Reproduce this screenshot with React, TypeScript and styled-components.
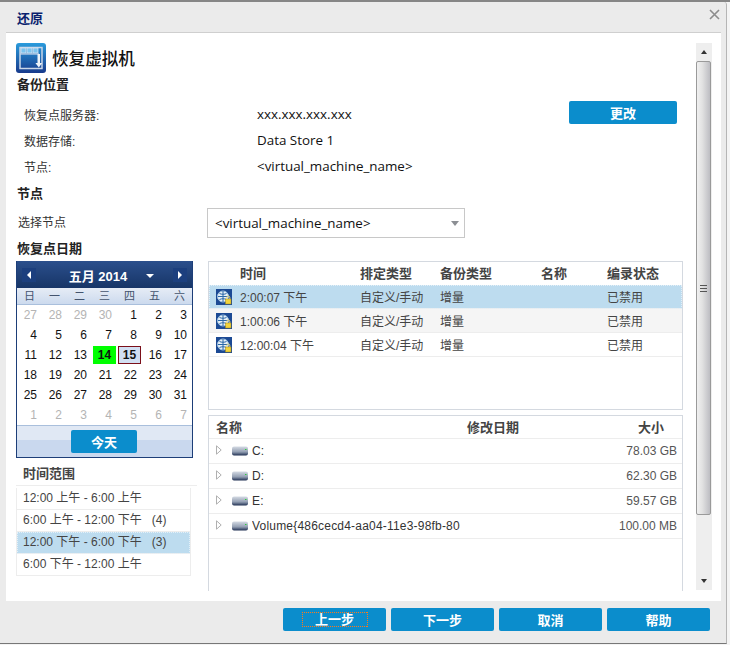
import { createGlobalStyle, styled } from 'styled-components';

const FONT = `"Liberation Sans", "Noto Sans CJK SC", sans-serif`;

const weekdays = ['日', '一', '二', '三', '四', '五', '六'];
const days = [27, 28, 29, 30, 1, 2, 3, 4, 5, 6, 7, 8, 9, 10, 11, 12, 13, 14, 15, 16, 17, 18, 19, 20, 21, 22, 23, 24, 25, 26, 27, 28, 29, 30, 31, 1, 2, 3, 4, 5, 6, 7];
const ranges = [
    { text: '12:00 上午 - 6:00 上午' },
    { text: '6:00 上午 - 12:00 下午', count: '(4)' },
    { text: '12:00 下午 - 6:00 下午', count: '(3)', active: true },
    { text: '6:00 下午 - 12:00 上午' },
];
const points = [
    { time: '2:00:07 下午', active: true },
    { time: '1:00:06 下午', alt: true },
    { time: '12:00:04 下午' },
];
const volumes = [
    { name: 'C:', size: '78.03 GB' },
    { name: 'D:', size: '62.30 GB' },
    { name: 'E:', size: '59.57 GB' },
    { name: 'Volume{486cecd4-aa04-11e3-98fb-806e6f6e6963}', size: '100.00 MB' },
];

function VmIcon() {
    return (
        <svg width="30" height="30" viewBox="0 0 30 30">
            <defs>
                <linearGradient id="vmBg" x1="0" y1="0" x2="0" y2="1">
                    <stop offset="0" stopColor="#2a9bdc" />
                    <stop offset="1" stopColor="#173a8c" />
                </linearGradient>
            </defs>
            <rect width="30" height="30" rx="3" fill="url(#vmBg)" />
            <rect x="4" y="4.5" width="22" height="21" fill="none" stroke="#c9d6e8" strokeWidth="1.5" />
            <rect x="5" y="5" width="5" height="5" fill="#7cc4ee" stroke="#d7e4f2" strokeWidth="0.8" />
            <rect x="11" y="5" width="5" height="5" fill="#7cc4ee" stroke="#d7e4f2" strokeWidth="0.8" />
            <rect x="17" y="5" width="5" height="5" fill="#7cc4ee" stroke="#d7e4f2" strokeWidth="0.8" />
            <path d="M4 11h19" stroke="#c9d6e8" strokeWidth="1.2" />
            <path d="M21.5 11h2.5v9h2.2l-3.4 4.5-3.4-4.5h2.1z" fill="#eef3f9" />
        </svg>
    );
}

function RecoveryIcon() {
    return (
        <svg width="16" height="16" viewBox="0 0 16 16">
            <rect width="16" height="16" fill="#1c4a94" />
            <circle cx="7" cy="7.5" r="5.5" fill="#e9f1f8" stroke="#9cc0de" />
            <path d="M7 2v11M2 7.5h10M3.5 4.5c2 1 5 1 7 0M3.5 10.5c2-1 5-1 7 0" stroke="#2a68a8" strokeWidth="1" fill="none" />
            <rect x="9.5" y="10" width="5.5" height="5" fill="#f2d43c" stroke="#a88c16" strokeWidth="0.5" />
            <path d="M10.8 10V8.5a1.5 1.5 0 0 1 3 0V10" fill="none" stroke="#e8d67a" strokeWidth="1" />
        </svg>
    );
}

function DriveIcon() {
    return (
        <svg width="16" height="10" viewBox="0 0 16 10">
            <defs>
                <linearGradient id="driveBg" x1="0" y1="0" x2="0" y2="1">
                    <stop offset="0" stopColor="#d5dbe4" />
                    <stop offset="0.6" stopColor="#929eb2" />
                    <stop offset="1" stopColor="#1f2f52" />
                </linearGradient>
            </defs>
            <rect y="0.5" width="16" height="9" rx="2" fill="url(#driveBg)" />
            <rect x="13" y="3" width="1.5" height="1" fill="#2ecc40" />
        </svg>
    );
}

function Expander() {
    return (
        <ExpanderIcon width="6" height="10" viewBox="0 0 6 10">
            <path d="M0.5 0.8L5.2 5 0.5 9.2z" fill="#fff" stroke="#b0b0b0" />
        </ExpanderIcon>
    );
}

export default function App() {
    return (
        <>
            <GlobalStyle />
            <Window>
                <TitleBar>
                    <Title>还原</Title>
                    <svg width="11" height="11" viewBox="0 0 11 11">
                        <path d="M1 1l9 9M10 1l-9 9" stroke="#8c8c8c" strokeWidth="1.6" fill="none" />
                    </svg>
                </TitleBar>

                <Panel>
                    <Content>
                        <Heading>
                            <VmIcon />
                            <HeadingText>恢复虚拟机</HeadingText>
                        </Heading>

                        <SectionTitle>备份位置</SectionTitle>
                        <Location>
                            <InfoRows>
                                <InfoRow>
                                    <InfoLabel>恢复点服务器:</InfoLabel>
                                    <InfoValue>xxx.xxx.xxx.xxx</InfoValue>
                                </InfoRow>
                                <InfoRow>
                                    <InfoLabel>数据存储:</InfoLabel>
                                    <InfoValue>Data Store 1</InfoValue>
                                </InfoRow>
                                <InfoRow>
                                    <InfoLabel>节点:</InfoLabel>
                                    <InfoValue>&lt;virtual_machine_name&gt;</InfoValue>
                                </InfoRow>
                            </InfoRows>
                            <ChangeButton>更改</ChangeButton>
                        </Location>

                        <NodeTitle>节点</NodeTitle>
                        <NodeRow>
                            <NodeLabel>选择节点</NodeLabel>
                            <Select>
                                <span>&lt;virtual_machine_name&gt;</span>
                                <SelectArrow />
                            </Select>
                        </NodeRow>

                        <DateTitle>恢复点日期</DateTitle>
                        <Columns>
                            <LeftColumn>
                                <Calendar>
                                    <CalendarHead>
                                        <NavButton>
                                            <NavArrow $left />
                                        </NavButton>
                                        <Month>
                                            五月 2014
                                            <MonthArrow />
                                        </Month>
                                        <NavButton>
                                            <NavArrow />
                                        </NavButton>
                                    </CalendarHead>
                                    <Weekdays>
                                        {weekdays.map((d) => (
                                            <Weekday key={d}>{d}</Weekday>
                                        ))}
                                    </Weekdays>
                                    <Days>
                                        {days.map((d, i) => (
                                            <Day
                                                key={i}
                                                $muted={i < 4 || i > 34}
                                                $green={i === 17}
                                                $today={i === 18}
                                            >
                                                {d}
                                            </Day>
                                        ))}
                                    </Days>
                                    <CalendarFoot>
                                        <TodayButton>今天</TodayButton>
                                    </CalendarFoot>
                                </Calendar>

                                <RangeTitle>时间范围</RangeTitle>
                                <RangeList>
                                    {ranges.map((r) => (
                                        <RangeRow key={r.text} $active={r.active}>
                                            {r.text}
                                            {r.count && <RangeCount>{r.count}</RangeCount>}
                                        </RangeRow>
                                    ))}
                                </RangeList>
                            </LeftColumn>

                            <RightColumn>
                                <PointsTable>
                                    <PointsHead>
                                        <span />
                                        <span>时间</span>
                                        <span>排定类型</span>
                                        <span>备份类型</span>
                                        <span>名称</span>
                                        <span>编录状态</span>
                                    </PointsHead>
                                    {points.map((p) => (
                                        <PointRow key={p.time} $active={p.active} $alt={p.alt}>
                                            <RecoveryIcon />
                                            <span>{p.time}</span>
                                            <span>自定义/手动</span>
                                            <span>增量</span>
                                            <span />
                                            <span>已禁用</span>
                                        </PointRow>
                                    ))}
                                </PointsTable>

                                <VolumesTable>
                                    <VolumesHead>
                                        <span>名称</span>
                                        <DateHead>修改日期</DateHead>
                                        <SizeHead>大小</SizeHead>
                                    </VolumesHead>
                                    {volumes.map((v) => (
                                        <VolumeRow key={v.name}>
                                            <Expander />
                                            <DriveIcon />
                                            <VolumeName>{v.name}</VolumeName>
                                            <VolumeSize>{v.size}</VolumeSize>
                                        </VolumeRow>
                                    ))}
                                </VolumesTable>
                            </RightColumn>
                        </Columns>
                    </Content>

                    <Scrollbar>
                        <ScrollEnd>
                            <ScrollArrow $up />
                        </ScrollEnd>
                        <ScrollTrack>
                            <ScrollThumb>
                                <ThumbGrip />
                            </ScrollThumb>
                        </ScrollTrack>
                        <ScrollEnd>
                            <ScrollArrow />
                        </ScrollEnd>
                    </Scrollbar>
                </Panel>

                <Footer>
                    <FooterButton>
                        <FocusLabel>上一步</FocusLabel>
                    </FooterButton>
                    <FooterButton>下一步</FooterButton>
                    <FooterButton>取消</FooterButton>
                    <FooterButton>帮助</FooterButton>
                </Footer>
            </Window>
        </>
    );
}

const GlobalStyle = createGlobalStyle`
    html, body {
        margin: 0;
        padding: 0;
        width: 730px;
        height: 645px;
        overflow: hidden;
        background: #f4f4f4;
    }
    body {
        border-top: 2px solid #868686;
        box-sizing: border-box;
    }
    #root {
        font-family: ${FONT};
    }
`;

const Window = styled.div`
    width: 727px;
    height: 642px;
    box-sizing: border-box;
    background: #ebebeb;
    border-bottom: 1px solid #777;
    border-right: 1px solid #b5b5b5;
    border-top-right-radius: 3px;
    display: flex;
    flex-direction: column;
`;

const TitleBar = styled.div`
    height: 30px;
    flex: none;
    display: flex;
    align-items: flex-start;
    justify-content: space-between;
    padding: 7px 6px 0 17px;
    box-sizing: border-box;
`;

const Title = styled.div`
    color: #0a1f6e;
    font-size: 13px;
    font-weight: 700;
    line-height: 19px;
`;

const Panel = styled.div`
    height: 569px;
    flex: none;
    margin: 0 5px 0 6px;
    background: #fff;
    border-top: 1px solid #cfcfcf;
    box-sizing: border-box;
    display: flex;
    padding: 10px;
`;

const Content = styled.div`
    width: 680px;
    overflow: hidden;
    flex: none;
`;

const Heading = styled.div`
    display: flex;
    align-items: center;
    gap: 6px;
    height: 30px;
`;

const HeadingText = styled.div`
    font-size: 16.6px;
    color: #111;
    font-weight: 500;
`;

const SectionTitle = styled.div`
    font-size: 13px;
    font-weight: 700;
    color: #222;
    line-height: 18px;
    margin: 3px 0 0 1px;
`;

const Location = styled.div`
    display: flex;
    justify-content: space-between;
    width: 661px;
    margin-top: 7px;
`;

const InfoRows = styled.div`
    padding-left: 8px;
`;

const InfoRow = styled.div`
    display: flex;
    align-items: center;
    height: 26px;
`;

const InfoLabel = styled.div`
    width: 233px;
    font-size: 12px;
    color: #333;
`;

const InfoValue = styled.div`
    font-family: "Open Sans", "Noto Sans CJK SC", sans-serif;
    font-size: 13.4px;
    color: #111;
`;

const ChangeButton = styled.button`
    width: 108px;
    height: 23px;
    border: 0;
    border-radius: 2px;
    background: #0b8dcc;
    color: #fff;
    font: 700 13px ${FONT};
    padding: 0;
`;

const NodeTitle = styled(SectionTitle)`
    margin: 6px 0 0 1px;
`;

const NodeRow = styled.div`
    display: flex;
    align-items: center;
    margin-top: 5px;
`;

const NodeLabel = styled.div`
    width: 191px;
    padding: 0 0 3px 2px;
    box-sizing: border-box;
    font-size: 12px;
    color: #333;
`;

const Select = styled.div`
    width: 258px;
    height: 30px;
    box-sizing: border-box;
    border: 1px solid #c8c8c8;
    padding: 0 5px 0 7px;
    display: flex;
    align-items: center;
    justify-content: space-between;
    font-family: "Open Sans", "Noto Sans CJK SC", sans-serif;
    font-size: 13.4px;
    color: #111;
`;

const SelectArrow = styled.i`
    width: 0;
    height: 0;
    border: 4px solid transparent;
    border-top: 5px solid #8c8f94;
    border-bottom: 0;
`;

const DateTitle = styled(SectionTitle)`
    margin: 2px 0 0 1px;
`;

const Columns = styled.div`
    display: flex;
    margin-top: 3px;
`;

const LeftColumn = styled.div`
    width: 192px;
    flex: none;
`;

const RightColumn = styled.div`
    width: 475px;
    flex: none;
`;

const Calendar = styled.div`
    width: 177px;
    height: 197px;
    box-sizing: border-box;
    border: 1px solid #1d3e78;
    border-top: 0;
    display: flex;
    flex-direction: column;
`;

const CalendarHead = styled.div`
    height: 27px;
    flex: none;
    display: flex;
    align-items: center;
    justify-content: space-between;
    padding: 0 5px;
    background: linear-gradient(#2b4f8c, #173567);
`;

const NavButton = styled.div`
    width: 14px;
    height: 14px;
    background: #1c3f7e;
    display: flex;
    align-items: center;
    justify-content: center;
`;

const NavArrow = styled.i<{ $left?: boolean }>`
    width: 0;
    height: 0;
    border-style: solid;
    border-color: transparent #fff;
    border-width: ${(p) => (p.$left ? '4px 4px 4px 0' : '4px 0 4px 4px')};
`;

const Month = styled.div`
    position: relative;
    left: 7px;
    top: 1px;
    color: #fff;
    font-size: 13px;
    font-weight: 700;
    display: flex;
    align-items: center;
    gap: 19px;
`;

const MonthArrow = styled.i`
    width: 0;
    height: 0;
    border: 4px solid transparent;
    border-top: 4px solid #fff;
    border-bottom: 0;
`;

const Weekdays = styled.div`
    height: 17px;
    flex: none;
    display: grid;
    grid-template-columns: repeat(7, 25px);
    background: linear-gradient(#e6ecf6, #ccdaee);
    border-bottom: 1px solid #a9bfdc;
    box-sizing: border-box;
`;

const Weekday = styled.div`
    font-size: 11px;
    line-height: 16px;
    text-align: center;
    color: #44546e;
`;

const Days = styled.div`
    display: grid;
    grid-template-columns: repeat(7, 25px);
    grid-auto-rows: 20px;
    flex: none;
    height: 120px;
    background: #fff;
`;

const Day = styled.div<{ $muted?: boolean; $green?: boolean; $today?: boolean }>`
    font-size: 12px;
    line-height: 18px;
    height: 18px;
    margin: 1px;
    text-align: right;
    padding-right: 4px;
    box-sizing: border-box;
    color: ${(p) => (p.$muted ? '#b4b4b4' : '#111')};
    ${(p) => p.$green && 'background: #0f0; font-weight: 700; text-align: center; padding: 0;'}
    ${(p) =>
        p.$today &&
        'background: #d2dff2; border: 1px solid #7b0f1a; line-height: 16px; font-weight: 700; text-align: center; padding: 0;'}
`;

const CalendarFoot = styled.div`
    flex: 1;
    display: flex;
    align-items: flex-start;
    justify-content: center;
    padding: 4px 1px 0 0;
    background: linear-gradient(#e0e8f4 0 45%, #c9d8ee 45%);
    border-top: 1px solid #a9bfdc;
`;

const TodayButton = styled.button`
    width: 66px;
    height: 23px;
    border: 0;
    border-radius: 2px;
    background: #0b8dcc;
    color: #fff;
    font: 700 13px ${FONT};
    padding: 0;
`;

const RangeTitle = styled.div`
    font-size: 13px;
    font-weight: 700;
    color: #444;
    line-height: 18px;
    margin: 7px 0 2px;
    padding: 0 0 2px 7px;
    width: 181px;
    box-sizing: border-box;
    border-bottom: 1px solid #ededed;
`;

const RangeList = styled.div`
    width: 175px;
    border-left: 1px solid #ededed;
    border-right: 1px solid #ededed;
    box-sizing: border-box;
`;

const RangeRow = styled.div<{ $active?: boolean }>`
    height: 22px;
    box-sizing: border-box;
    font-size: 12px;
    line-height: 20px;
    padding-left: 6px;
    color: #444;
    border-bottom: 1px solid #ededed;
    background: ${(p) => (p.$active ? '#bddcef' : '#fff')};
    ${(p) => p.$active && 'outline: 1px dotted #e4f0f8; outline-offset: -1px;'}
`;

const RangeCount = styled.span`
    margin-left: 10px;
`;

const PointsTable = styled.div`
    height: 149px;
    box-sizing: border-box;
    border: 1px solid #d4d9e0;
`;

const PointsHead = styled.div`
    display: grid;
    grid-template-columns: 31px 120px 80px 101px 66px 1fr;
    align-items: center;
    height: 23px;
    padding-bottom: 2px;
    box-sizing: border-box;
    font-size: 13px;
    font-weight: 700;
    color: #444;
`;

const PointRow = styled.div<{ $active?: boolean; $alt?: boolean }>`
    display: grid;
    grid-template-columns: 24px 120px 80px 101px 66px 1fr;
    align-items: center;
    height: 24px;
    box-sizing: border-box;
    padding-left: 7px;
    font-size: 12px;
    color: #444;
    border-bottom: 1px solid #ededed;
    background: ${(p) => (p.$active ? '#bddcef' : p.$alt ? '#f5f5f5' : '#fff')};
    ${(p) => p.$active && 'outline: 1px dotted #e4f0f8; outline-offset: -1px;'}
`;

const VolumesTable = styled.div`
    height: 176px;
    box-sizing: border-box;
    margin-top: 5px;
    border: 1px solid #d4d9e0;
    border-bottom: 0;
`;

const VolumesHead = styled.div`
    display: flex;
    align-items: center;
    height: 23px;
    box-sizing: border-box;
    padding: 0 0 1px 7px;
    font-size: 13px;
    font-weight: 700;
    color: #444;
    border-bottom: 1px solid #ededed;
`;

const DateHead = styled.span`
    margin-left: 225px;
`;

const SizeHead = styled.span`
    margin-left: 119px;
`;

const VolumeRow = styled.div`
    display: flex;
    align-items: center;
    height: 25px;
    box-sizing: border-box;
    padding: 0 5px 0 7px;
    font-size: 12px;
    color: #333;
    border-bottom: 1px solid #ededed;
`;

const ExpanderIcon = styled.svg`
    flex: none;
    margin: -3px 10px 0 0;
`;

const VolumeName = styled.div`
    width: 208px;
    margin-left: 4px;
    white-space: nowrap;
    overflow: hidden;
    letter-spacing: 0.2px;
`;

const VolumeSize = styled.div`
    flex: 1;
    text-align: right;
    color: #555;
`;

const Scrollbar = styled.div`
    width: 16px;
    height: 547px;
    flex: none;
    display: flex;
    flex-direction: column;
    background: #eee;
`;

const ScrollEnd = styled.div`
    height: 18px;
    flex: none;
    display: flex;
    align-items: center;
    justify-content: center;
`;

const ScrollArrow = styled.i<{ $up?: boolean }>`
    width: 0;
    height: 0;
    border: 3.5px solid transparent;
    ${(p) => (p.$up ? 'border-bottom: 4px solid #333; border-top: 0;' : 'border-top: 4px solid #333; border-bottom: 0;')}
`;

const ScrollTrack = styled.div`
    flex: 1;
`;

const ScrollThumb = styled.div`
    width: 15px;
    height: 454px;
    box-sizing: border-box;
    border: 1px solid #9a9a9a;
    border-radius: 2px;
    background: linear-gradient(90deg, #f0f0f0, #e2e2e2 40%, #bdbdc2);
    display: flex;
    align-items: center;
    justify-content: center;
`;

const ThumbGrip = styled.i`
    width: 7px;
    height: 5px;
    border-top: 1px solid #555;
    border-bottom: 1px solid #555;
    background: linear-gradient(#0000 40%, #555 40% 60%, #0000 60%);
`;

const Footer = styled.div`
    flex: 1;
    display: flex;
    justify-content: flex-end;
    gap: 5px;
    padding: 7px 16px 0 0;
`;

const FooterButton = styled.button`
    width: 103px;
    height: 23px;
    border: 0;
    border-radius: 2px;
    background: #0b8dcc;
    color: #fff;
    font: 700 13px ${FONT};
    padding: 0;
    display: flex;
    align-items: center;
    justify-content: center;
`;

const FocusLabel = styled.span`
    width: 66px;
    height: 15px;
    line-height: 15px;
    --dots-x: repeating-linear-gradient(90deg, #ff7a1a 0 1px, transparent 1px 2px);
    --dots-y: repeating-linear-gradient(0deg, #ff7a1a 0 1px, transparent 1px 2px);
    background:
        var(--dots-x) top / 100% 1px no-repeat,
        var(--dots-x) bottom / 100% 1px no-repeat,
        var(--dots-y) left / 1px 100% no-repeat,
        var(--dots-y) right / 1px 100% no-repeat;
`;
